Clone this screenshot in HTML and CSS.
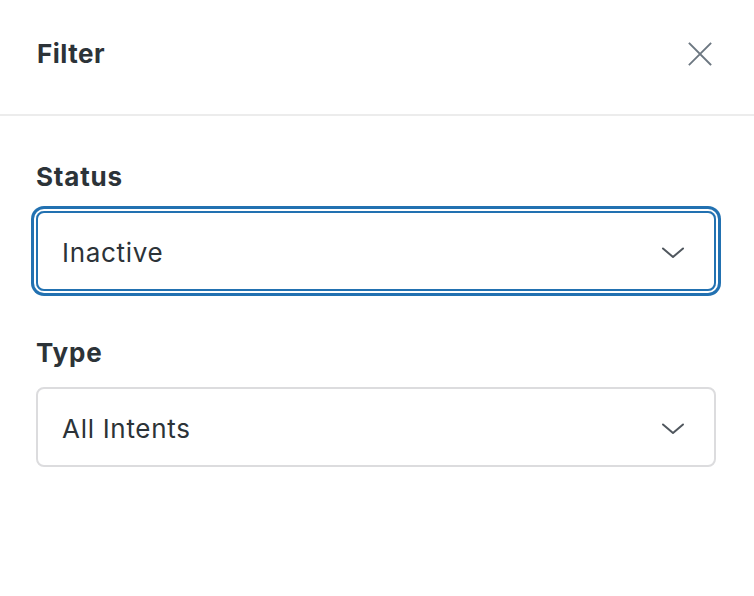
FILE: index.html
```html
<!DOCTYPE html>
<html lang="en">
<head>
<meta charset="utf-8">
<title>Filter</title>
<link rel="stylesheet" href="styles.css">
</head>
<body>
<div class="panel">
  <header class="panel-header">
    <h1 class="panel-title">Filter</h1>
    <button class="close-btn" aria-label="Close">
      <svg width="24" height="24" viewBox="0 0 24 24" fill="none" stroke="currentColor" stroke-width="1.8" stroke-linecap="square">
        <path d="M1.5 1.5 L22.5 22.5 M22.5 1.5 L1.5 22.5"/>
      </svg>
    </button>
  </header>
  <div class="panel-body">
    <div class="field">
      <label class="field-label">Status</label>
      <div class="select is-focused" role="button" tabindex="0">
        <span class="select-value">Inactive</span>
        <svg class="chevron" width="24" height="12" viewBox="0 0 24 12" fill="none" stroke="currentColor" stroke-width="2" stroke-linecap="round" stroke-linejoin="round">
          <path d="M2 1.5 L12 10 L22 1.5"/>
        </svg>
      </div>
    </div>
    <div class="field">
      <label class="field-label">Type</label>
      <div class="select" role="button" tabindex="0">
        <span class="select-value">All Intents</span>
        <svg class="chevron" width="24" height="12" viewBox="0 0 24 12" fill="none" stroke="currentColor" stroke-width="2" stroke-linecap="round" stroke-linejoin="round">
          <path d="M2 1.5 L12 10 L22 1.5"/>
        </svg>
      </div>
    </div>
  </div>
</div>
</body>
</html>
```
FILE: styles.css
```css
* { box-sizing: border-box; }
html, body { margin: 0; padding: 0; background: #fff; }
body {
  font-family: Inter, "Noto Sans", "Liberation Sans", sans-serif;
  color: #2c3338;
  width: 754px;
  height: 596px;
  overflow: hidden;
}
.panel { display: flex; flex-direction: column; }
.panel-header {
  height: 116px;
  border-bottom: 2px solid #ececec;
  display: flex;
  align-items: center;
  justify-content: space-between;
  padding: 0 42px 6px 37px;
}
.panel-title {
  margin: 0;
  font-size: 26px;
  font-weight: 700;
  line-height: 32px;
  letter-spacing: 0.5px;
}
.close-btn {
  border: 0;
  background: none;
  padding: 0;
  color: #6c7781;
  display: flex;
  width: 24px;
  height: 24px;
}
.panel-body {
  padding: 45px 38px 0 36px;
  display: flex;
  flex-direction: column;
  gap: 46px;
}
.field { display: flex; flex-direction: column; gap: 18px; }
.field-label {
  font-size: 26px;
  font-weight: 700;
  line-height: 32px;
  letter-spacing: 0.8px;
}
.select {
  height: 80px;
  border: 2px solid #dcdcde;
  border-radius: 8px;
  display: flex;
  align-items: center;
  justify-content: space-between;
  padding: 4px 29px 0 24px;
}
.select.is-focused {
  border-color: #2271b1;
  box-shadow: 0 0 0 2px #fff, 0 0 0 5px #2271b1;
}
.select-value {
  font-size: 26px;
  line-height: 32px;
  font-weight: 400;
  letter-spacing: 0.7px;
}
.chevron { color: #50575e; }
```
